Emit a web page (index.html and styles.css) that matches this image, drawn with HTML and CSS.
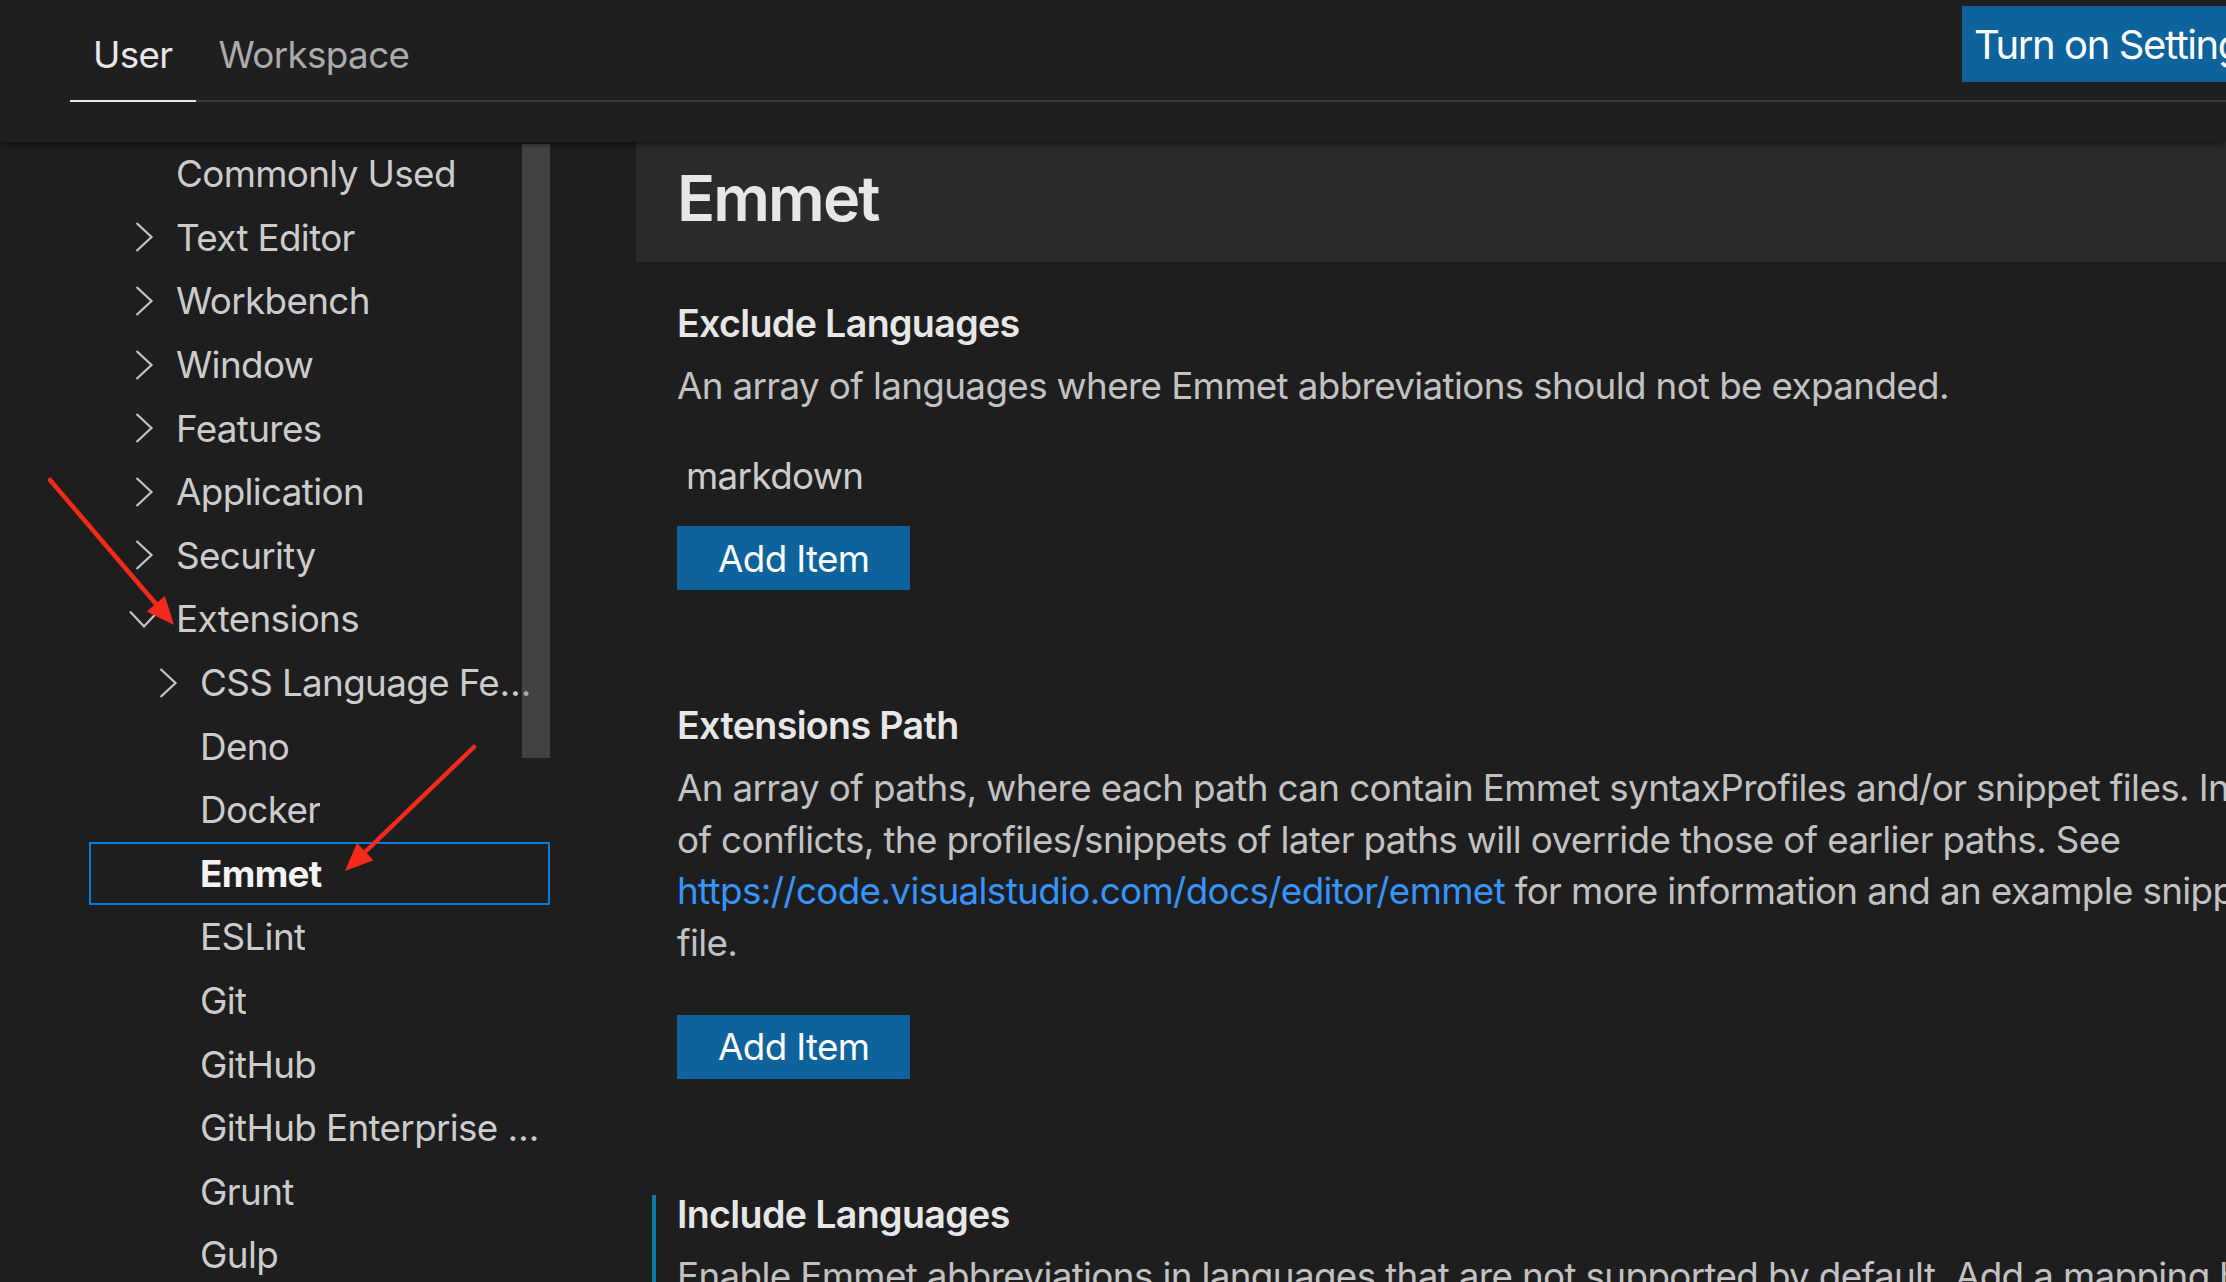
FILE: index.html
```html
<!DOCTYPE html>
<html lang="en">
<head>
<meta charset="utf-8">
<title>Settings</title>
<link rel="stylesheet" href="styles.css">
</head>
<body>
<div class="app">
  <header class="header">
    <div class="tabbar">
      <div class="tabs">
        <div class="tab active">User</div>
        <div class="tab">Workspace</div>
      </div>
      <button class="sync-btn">Turn on Settings Sync</button>
    </div>
  </header>

  <div class="main">
    <nav class="toc">
      <div class="row l1"><span class="twistie"></span><span class="label">Commonly Used</span></div>
      <div class="row l1"><span class="twistie"><svg viewBox="0 0 32 32"><path d="M8.5 2 L23.5 16 L8.5 30"/></svg></span><span class="label">Text Editor</span></div>
      <div class="row l1"><span class="twistie"><svg viewBox="0 0 32 32"><path d="M8.5 2 L23.5 16 L8.5 30"/></svg></span><span class="label">Workbench</span></div>
      <div class="row l1"><span class="twistie"><svg viewBox="0 0 32 32"><path d="M8.5 2 L23.5 16 L8.5 30"/></svg></span><span class="label">Window</span></div>
      <div class="row l1"><span class="twistie"><svg viewBox="0 0 32 32"><path d="M8.5 2 L23.5 16 L8.5 30"/></svg></span><span class="label">Features</span></div>
      <div class="row l1"><span class="twistie"><svg viewBox="0 0 32 32"><path d="M8.5 2 L23.5 16 L8.5 30"/></svg></span><span class="label">Application</span></div>
      <div class="row l1"><span class="twistie"><svg viewBox="0 0 32 32"><path d="M8.5 2 L23.5 16 L8.5 30"/></svg></span><span class="label">Security</span></div>
      <div class="row l1"><span class="twistie"><svg viewBox="0 0 32 32"><path d="M2 8.5 L16 23.5 L30 8.5"/></svg></span><span class="label">Extensions</span></div>
      <div class="row l2"><span class="twistie"><svg viewBox="0 0 32 32"><path d="M8.5 2 L23.5 16 L8.5 30"/></svg></span><span class="label">CSS Language Features</span></div>
      <div class="row l2"><span class="twistie"></span><span class="label">Deno</span></div>
      <div class="row l2"><span class="twistie"></span><span class="label">Docker</span></div>
      <div class="row l2 selected"><span class="twistie"></span><span class="label">Emmet</span></div>
      <div class="row l2"><span class="twistie"></span><span class="label">ESLint</span></div>
      <div class="row l2"><span class="twistie"></span><span class="label">Git</span></div>
      <div class="row l2"><span class="twistie"></span><span class="label">GitHub</span></div>
      <div class="row l2"><span class="twistie"></span><span class="label">GitHub Enterprise Server Integration</span></div>
      <div class="row l2"><span class="twistie"></span><span class="label">Grunt</span></div>
      <div class="row l2"><span class="twistie"></span><span class="label">Gulp</span></div>
      <div class="scrollbar"></div>
    </nav>

    <section class="content">
      <div class="group-title">Emmet</div>

      <div class="setting">
        <div class="setting-body">
          <div class="setting-title">Exclude Languages</div>
          <div class="setting-desc">An array of languages where Emmet abbreviations should not be expanded.</div>
          <div class="list-item">markdown</div>
          <button class="add-btn">Add Item</button>
        </div>
      </div>

      <div class="setting">
        <div class="setting-body">
          <div class="setting-title">Extensions Path</div>
          <div class="setting-desc">An array of paths, where each path can contain Emmet syntaxProfiles and/or snippet files. In case of conflicts, the profiles/snippets of later paths will override those of earlier paths. See <a class="link" href="#">https://code.visualstudio.com/docs/editor/emmet</a> for more information and an example snippet file.</div>
          <button class="add-btn add-btn-far">Add Item</button>
        </div>
      </div>

      <div class="setting modified">
        <div class="setting-body">
          <div class="setting-title">Include Languages</div>
          <div class="setting-desc">Enable Emmet abbreviations in languages that are not supported by default. Add a mapping here between the language and Emmet supported language.</div>
        </div>
      </div>
    </section>
  </div>

  <svg class="annotations" width="2226" height="1282" viewBox="0 0 2226 1282">
    <g stroke="#f5291c" stroke-width="4.5" fill="none" stroke-linecap="round">
      <line x1="50" y1="480" x2="156" y2="604"/>
      <line x1="474" y1="747" x2="365" y2="852"/>
    </g>
    <g fill="#f5291c">
      <polygon points="174,625 146.7,611.5 164.9,595.9"/>
      <polygon points="345,871 356.9,842.9 373.5,860.3"/>
    </g>
  </svg>
</div>
</body>
</html>
```

FILE: styles.css
```css
html, body {
  margin: 0;
  padding: 0;
}

body {
  width: 2226px;
  height: 1282px;
  overflow: hidden;
  background: #1e1e1e;
  font-family: "Inter", "Noto Sans", sans-serif;
  letter-spacing: -0.04em;
  color: #cccccc;
}

.app {
  position: relative;
  width: 2226px;
  height: 1282px;
  overflow: hidden;
}

/* ---------- header ---------- */
.header {
  position: relative;
  z-index: 2;
  height: 142px;
  box-sizing: border-box;
  padding-left: 70px;
  background: #1f1f1f;
  box-shadow: 0 5px 5px -2px rgba(0, 0, 0, 0.45);
}

.tabbar {
  display: grid;
  grid-template-columns: 1892px auto;
  align-items: start;
  height: 100px;
  border-bottom: 2px solid #3a3a3a;
}

.tabs {
  display: flex;
  height: 100px;
}

.tab {
  display: flex;
  align-items: center;
  box-sizing: border-box;
  height: 102px;
  padding: 8px 23px 0;
  margin-bottom: -2px;
  border-bottom: 2px solid transparent;
  font-size: 36.8px;
  color: #ababab;
}

.tab.active {
  color: #e7e7e7;
  border-bottom-color: #e7e7e7;
}

.sync-btn {
  margin-top: 6px;
  height: 76px;
  padding: 0 12px;
  border: none;
  background: #0e639c;
  color: #ffffff;
  font-family: inherit;
  letter-spacing: -0.035em;
  font-size: 40px;
  white-space: nowrap;
  text-align: left;
}

/* ---------- main ---------- */
.main {
  display: flex;
  height: 1140px;
}

.toc {
  position: relative;
  flex: 0 0 550px;
  width: 550px;
  min-width: 0;
  box-sizing: border-box;
  padding-left: 89px;
}

.row {
  display: flex;
  align-items: center;
  height: 63.6px;
  box-sizing: border-box;
  padding-right: 2px;
  font-size: 36.8px;
  color: #cccccc;
}

.row.l1 { padding-left: 39px; }
.row.l2 { padding-left: 63px; }

.twistie {
  flex: 0 0 32px;
  width: 32px;
  height: 32px;
}

.twistie svg {
  display: block;
  width: 32px;
  height: 32px;
  fill: none;
  stroke: #c5c5c5;
  stroke-width: 2.2;
}

.label {
  min-width: 0;
  padding-left: 16px;
  overflow: hidden;
  text-overflow: ellipsis;
  white-space: nowrap;
}

.row.selected {
  outline: 2px solid #0a7bd6;
  outline-offset: -2px;
}

.row.selected .label {
  color: #f4f4f4;
  font-weight: 700;
}

.scrollbar {
  position: absolute;
  left: 522px;
  top: 2px;
  width: 28px;
  height: 614px;
  background: rgba(121, 121, 121, 0.4);
}

/* ---------- content ---------- */
.content {
  flex: 1 1 auto;
  margin-left: 86px;
  min-width: 0;
}

.group-title {
  display: flex;
  align-items: center;
  height: 120px;
  box-sizing: border-box;
  padding: 0 0 9px 41px;
  background: #2b2b2b;
  color: #e7e7e7;
  font-size: 63px;
  font-weight: 600;
  letter-spacing: -0.03em;
}

.setting {
  padding: 42px 0 74px 16px;
}

.setting-body {
  border-left: 4px solid transparent;
  padding-left: 21px;
}

.setting.modified .setting-body {
  border-left-color: #0c7d9d;
}

.setting-title {
  line-height: 40px;
  font-size: 37.6px;
  font-weight: 600;
  color: #e7e7e7;
}

.setting-desc {
  width: 1645px;
  margin-top: 15.5px;
  line-height: 51.8px;
  font-size: 36.8px;
  color: #c2c2c2;
}

.link {
  color: #3794ff;
  text-decoration: none;
}

.list-item {
  margin-top: 39px;
  padding-left: 9px;
  line-height: 52px;
  font-size: 36.8px;
  color: #cccccc;
}

.add-btn {
  display: block;
  margin-top: 24px;
  height: 64px;
  padding: 0 41px;
  border: none;
  background: #0e639c;
  color: #ffffff;
  font-family: inherit;
  letter-spacing: inherit;
  font-size: 36.8px;
}

.add-btn-far {
  margin-top: 46px;
}

/* ---------- annotations ---------- */
.annotations {
  position: absolute;
  left: 0;
  top: 0;
  pointer-events: none;
  z-index: 5;
}
```
